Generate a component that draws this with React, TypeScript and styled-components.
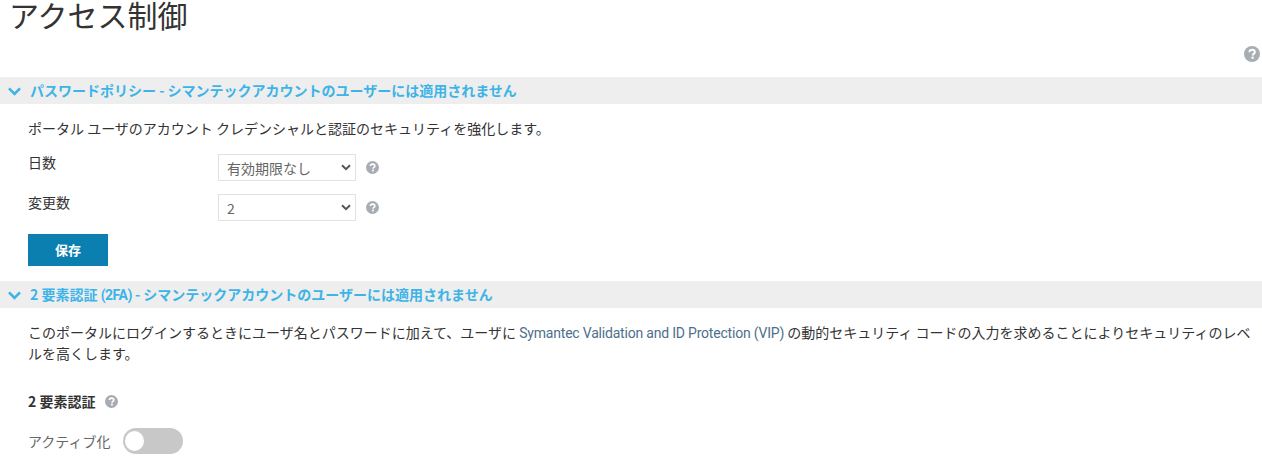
import styled, { createGlobalStyle } from "styled-components";

const GlobalStyle = createGlobalStyle`
  html, body {
    margin: 0;
    padding: 0;
    background: #fff;
    overflow: hidden;
  }
  body {
    font-family: "Noto Sans CJK JP", "Noto Sans", sans-serif;
    color: #333;
  }
`;

const selectArrow = encodeURIComponent(
  '<svg xmlns="http://www.w3.org/2000/svg" width="10" height="7" viewBox="0 0 10 7"><path d="M1 1.2 L5 5.2 L9 1.2" fill="none" stroke="#555" stroke-width="2"/></svg>'
);

const Page = styled.div`
  width: 1262px;
  height: 465px;
  overflow: hidden;
`;

const Title = styled.h1`
  margin: 0;
  height: 46px;
  padding-left: 9px;
  font-size: 30px;
  font-weight: 400;
  line-height: 28px;
  color: #333;
`;

const HelpRow = styled.div`
  display: flex;
  justify-content: flex-end;
  height: 31px;
  padding-right: 2px;
`;

const SectionBar = styled.div`
  display: flex;
  align-items: center;
  gap: 9px;
  height: 27px;
  padding: 0 0 2px 8px;
  box-sizing: border-box;
  background: #eeeeee;
  color: #3cb4e7;
  font-size: 14px;
  font-weight: 700;
`;

const ChevronIcon = styled.svg`
  display: block;
  margin-top: 3px;
`;

const Narrow = styled.span<{ $link?: boolean }>`
  font-family: "Roboto", sans-serif;
  font-size: 14px;
  letter-spacing: ${(props) => (props.$link ? "-0.2px" : "-0.5px")};
  color: ${(props) => (props.$link ? "#4d6f8c" : "inherit")};
`;

const SectionBody = styled.div`
  padding: 14px 0 15px 28px;
  font-size: 14px;
`;

const Description = styled.p`
  margin: 0 0 16px;
  font-size: 14px;
  line-height: 20px;
`;

const FieldRow = styled.div`
  display: flex;
  align-items: flex-start;
  height: 40px;
`;

const FieldLabel = styled.label`
  width: 190px;
  font-size: 14px;
  line-height: 17px;
`;

const Select = styled.select`
  appearance: none;
  width: 138px;
  height: 27px;
  box-sizing: border-box;
  border: 1px solid #e2e2e2;
  background: #fff url("data:image/svg+xml,${selectArrow}") no-repeat right 4px center;
  color: #666;
  font-family: inherit;
  font-size: 14px;
  padding-left: 8px;
`;

const HelpSlot = styled.span`
  display: flex;
  align-items: center;
  height: 27px;
  margin-left: 10px;
`;

const SaveButton = styled.button`
  display: block;
  width: 80px;
  height: 32px;
  border: none;
  padding: 0 0 2px;
  background: #0a7fb0;
  color: #fff;
  font-family: inherit;
  font-size: 13px;
  font-weight: 700;
`;

const SubHeading = styled.div`
  display: flex;
  align-items: center;
  gap: 10px;
  margin-top: 28px;
  font-size: 14px;
  font-weight: 700;
  line-height: 20px;
`;

const ToggleRow = styled.div`
  display: flex;
  align-items: center;
  gap: 13px;
  margin-top: 17px;
  font-size: 14px;
  color: #666;
`;

const ToggleTrack = styled.span`
  position: relative;
  display: block;
  width: 60px;
  height: 26px;
  border-radius: 13px;
  background: #c8c8c8;
`;

const ToggleKnob = styled.span`
  position: absolute;
  left: 2px;
  top: 3px;
  width: 19px;
  height: 20px;
  border-radius: 50%;
  background: #fff;
`;

const Help = ({ size = 13 }: { size?: number }) => (
  <svg width={size} height={size} viewBox="0 0 16 16">
    <circle cx="8" cy="8" r="8" fill="#a8adb3" />
    <path
      d="M5.4 6.2 C5.5 4.6 6.6 3.8 8.1 3.8 C9.7 3.8 10.8 4.7 10.8 6 C10.8 7.9 8.7 7.8 8.7 9.4"
      fill="none"
      stroke="#fff"
      strokeWidth="2"
    />
    <rect x="7.5" y="10.6" width="2.2" height="2.2" fill="#fff" />
  </svg>
);

const Chevron = () => (
  <ChevronIcon width="13" height="9" viewBox="0 0 13 9">
    <path d="M1 1.4 L6.5 7 L12 1.4" fill="none" stroke="#3cb4e7" strokeWidth="2.6" />
  </ChevronIcon>
);

export default function App() {
  return (
    <Page>
      <GlobalStyle />
      <Title>アクセス制御</Title>
      <HelpRow>
        <Help size={16} />
      </HelpRow>
      <SectionBar>
        <Chevron />
        <span>パスワードポリシー - シマンテックアカウントのユーザーには適用されません</span>
      </SectionBar>
      <SectionBody>
        <Description>ポータル ユーザのアカウント クレデンシャルと認証のセキュリティを強化します。</Description>
        <FieldRow>
          <FieldLabel>日数</FieldLabel>
          <Select defaultValue="none">
            <option value="none">有効期限なし</option>
          </Select>
          <HelpSlot>
            <Help />
          </HelpSlot>
        </FieldRow>
        <FieldRow>
          <FieldLabel>変更数</FieldLabel>
          <Select defaultValue="2">
            <option value="2">2</option>
          </Select>
          <HelpSlot>
            <Help />
          </HelpSlot>
        </FieldRow>
        <SaveButton>保存</SaveButton>
      </SectionBody>
      <SectionBar>
        <Chevron />
        <span>
          2 要素認証 <Narrow>(2FA)</Narrow> - シマンテックアカウントのユーザーには適用されません
        </span>
      </SectionBar>
      <SectionBody>
        <Description>
          このポータルにログインするときにユーザ名とパスワードに加えて、ユーザに{" "}
          <Narrow $link>Symantec Validation and ID Protection (VIP)</Narrow> の動的セキュリティ
          コードの入力を求めることによりセキュリティのレベルを高くします。
        </Description>
        <SubHeading>
          2 要素認証
          <Help />
        </SubHeading>
        <ToggleRow>
          アクティブ化
          <ToggleTrack>
            <ToggleKnob />
          </ToggleTrack>
        </ToggleRow>
      </SectionBody>
    </Page>
  );
}
